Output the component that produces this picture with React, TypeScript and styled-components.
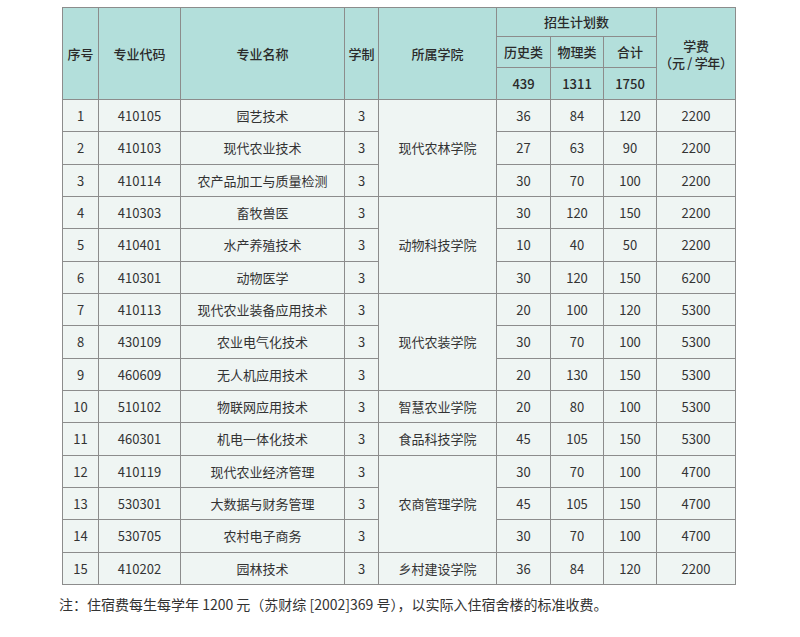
import React from "react";
import styled, { createGlobalStyle } from "styled-components";

type Row = {
  no: number;
  code: string;
  name: string;
  years: number;
  college?: string;
  span?: number;
  hist: number;
  phys: number;
  total: number;
  fee: number;
};

const rows: Row[] = [
  { no: 1, code: "410105", name: "园艺技术", years: 3, college: "现代农林学院", span: 3, hist: 36, phys: 84, total: 120, fee: 2200 },
  { no: 2, code: "410103", name: "现代农业技术", years: 3, hist: 27, phys: 63, total: 90, fee: 2200 },
  { no: 3, code: "410114", name: "农产品加工与质量检测", years: 3, hist: 30, phys: 70, total: 100, fee: 2200 },
  { no: 4, code: "410303", name: "畜牧兽医", years: 3, college: "动物科技学院", span: 3, hist: 30, phys: 120, total: 150, fee: 2200 },
  { no: 5, code: "410401", name: "水产养殖技术", years: 3, hist: 10, phys: 40, total: 50, fee: 2200 },
  { no: 6, code: "410301", name: "动物医学", years: 3, hist: 30, phys: 120, total: 150, fee: 6200 },
  { no: 7, code: "410113", name: "现代农业装备应用技术", years: 3, college: "现代农装学院", span: 3, hist: 20, phys: 100, total: 120, fee: 5300 },
  { no: 8, code: "430109", name: "农业电气化技术", years: 3, hist: 30, phys: 70, total: 100, fee: 5300 },
  { no: 9, code: "460609", name: "无人机应用技术", years: 3, hist: 20, phys: 130, total: 150, fee: 5300 },
  { no: 10, code: "510102", name: "物联网应用技术", years: 3, college: "智慧农业学院", span: 1, hist: 20, phys: 80, total: 100, fee: 5300 },
  { no: 11, code: "460301", name: "机电一体化技术", years: 3, college: "食品科技学院", span: 1, hist: 45, phys: 105, total: 150, fee: 5300 },
  { no: 12, code: "410119", name: "现代农业经济管理", years: 3, college: "农商管理学院", span: 3, hist: 30, phys: 70, total: 100, fee: 4700 },
  { no: 13, code: "530301", name: "大数据与财务管理", years: 3, hist: 45, phys: 105, total: 150, fee: 4700 },
  { no: 14, code: "530705", name: "农村电子商务", years: 3, hist: 30, phys: 70, total: 100, fee: 4700 },
  { no: 15, code: "410202", name: "园林技术", years: 3, college: "乡村建设学院", span: 1, hist: 36, phys: 84, total: 120, fee: 2200 },
];

const widths = [36, 82, 164, 34, 118, 54, 53, 53, 79];

const App: React.FC = () => {
  return (
    <>
      <GlobalStyle />
      <Page>
        <Table>
          <colgroup>
            {widths.map((w, i) => (
              <col key={i} style={{ width: w }} />
            ))}
          </colgroup>
          <thead>
            <HeadRow $h={29}>
              <Th rowSpan={3}>序号</Th>
              <Th rowSpan={3}>专业代码</Th>
              <Th rowSpan={3}>专业名称</Th>
              <Th rowSpan={3}>学制</Th>
              <Th rowSpan={3}>所属学院</Th>
              <Th colSpan={3}>招生计划数</Th>
              <Th rowSpan={3}>
                <FeeLine>学费</FeeLine>
                <FeeLine>（元 / 学年）</FeeLine>
              </Th>
            </HeadRow>
            <HeadRow $h={31}>
              <Th>历史类</Th>
              <Th>物理类</Th>
              <Th>合计</Th>
            </HeadRow>
            <HeadRow $h={32}>
              <Th>439</Th>
              <Th>1311</Th>
              <Th>1750</Th>
            </HeadRow>
          </thead>
          <tbody>
            {rows.map((r) => (
              <BodyRow key={r.no}>
                <Td>{r.no}</Td>
                <Td>{r.code}</Td>
                <Td>{r.name}</Td>
                <Td>{r.years}</Td>
                {r.college && <Td rowSpan={r.span}>{r.college}</Td>}
                <Td>{r.hist}</Td>
                <Td>{r.phys}</Td>
                <Td>{r.total}</Td>
                <Td>{r.fee}</Td>
              </BodyRow>
            ))}
          </tbody>
        </Table>
        <Note>
          注：住宿费每生每学年 1200 元（苏财综 [2002]369 号），以实际入住宿舍楼的标准收费。
        </Note>
      </Page>
    </>
  );
};

export default App;

const GlobalStyle = createGlobalStyle`
  html, body {
    margin: 0;
    padding: 0;
    background: #ffffff;
  }
  body {
    font-family: "Noto Sans CJK SC", "Noto Sans", sans-serif;
    color: #333333;
  }
`;

const Page = styled.div`
  width: 800px;
  height: 637px;
  padding: 7px 0 0 62px;
  box-sizing: border-box;
`;

const Table = styled.table`
  width: 673px;
  border-collapse: collapse;
  table-layout: fixed;
  border: 1px solid #8c8c8c;
  font-size: 13px;
`;

const HeadRow = styled.tr<{ $h: number }>`
  height: ${(p) => p.$h}px;
`;

const Th = styled.th`
  background: #b3dfdb;
  border: 1px solid #8c8c8c;
  color: #2a2a2a;
  font-weight: 500;
  text-align: center;
  vertical-align: middle;
  padding: 0;
  line-height: 16px;
`;

const FeeLine = styled.div`
  line-height: 17px;
  white-space: nowrap;
  letter-spacing: -0.3px;
`;

const BodyRow = styled.tr`
  height: 32.33px;
`;

const Td = styled.td`
  background: #eff5f3;
  border: 1px solid #8c8c8c;
  text-align: center;
  vertical-align: middle;
  padding: 0;
  color: #333333;
  white-space: nowrap;
`;

const Note = styled.p`
  margin: 9px 0 0 -3px;
  font-size: 14px;
  line-height: 20px;
  color: #333333;
`;
